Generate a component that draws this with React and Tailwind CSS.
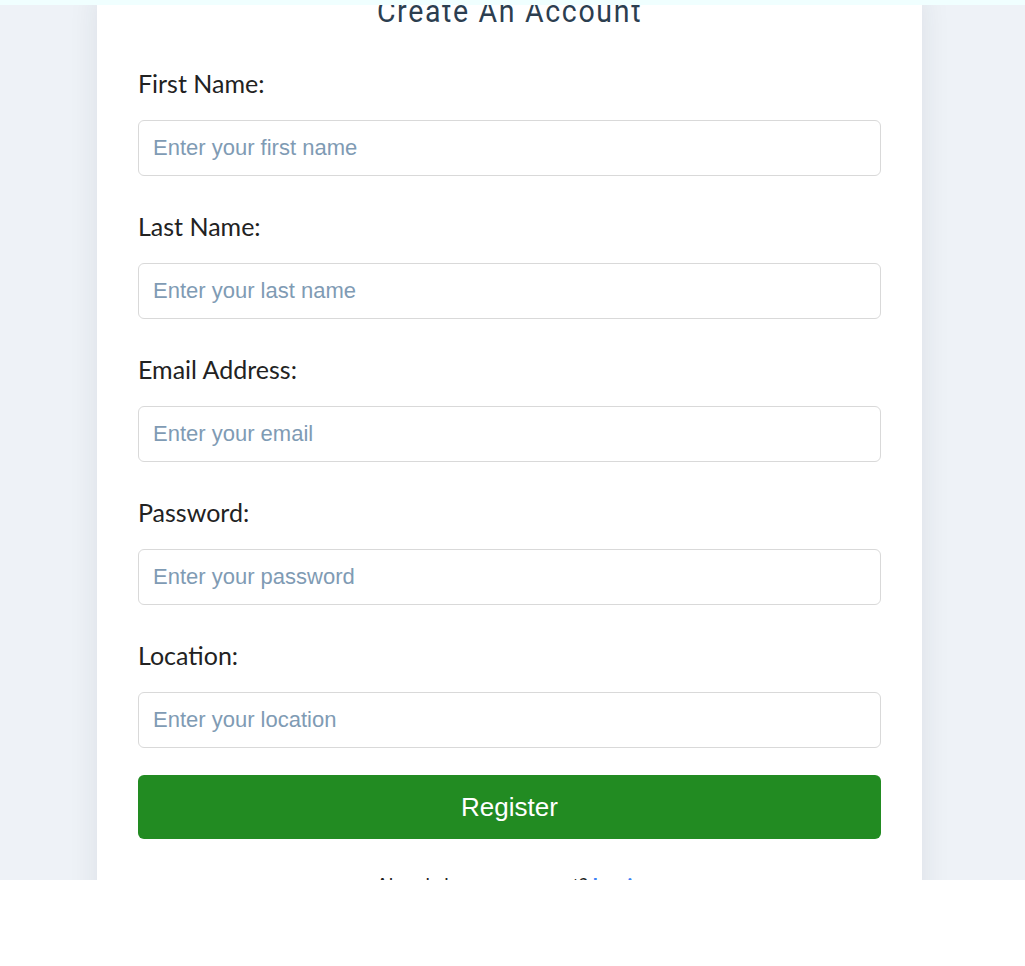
const fields = [
  { label: "First Name:", placeholder: "Enter your first name", type: "text" },
  { label: "Last Name:", placeholder: "Enter your last name", type: "text" },
  { label: "Email Address:", placeholder: "Enter your email", type: "email" },
  { label: "Password:", placeholder: "Enter your password", type: "password" },
  { label: "Location:", placeholder: "Enter your location", type: "text" },
];

const App = () => {
  return (
    <div className="h-[966px] flex flex-col bg-white">
      {/* top strip */}
      <div className="h-[5px] bg-[#f0ffff]" />

      <div className="h-[875px] overflow-hidden bg-[#eef2f7]">
        <div className="ml-[97px] w-[825px] min-h-[1000px] bg-white shadow-[0_0_28px_rgba(30,40,60,0.09)] px-[41px] pb-[40px]">
          <h2 className="-mt-[11px] text-center text-[31px] leading-[36px] tracking-[1.8px] text-[#2c3e50] font-['Roboto',sans-serif] scale-x-[0.92]">
            Create An Account
          </h2>

          <form className="mt-[37px] flex flex-col" onSubmit={(e) => e.preventDefault()}>
            {fields.map((f, i) => (
              <div
                key={f.label}
                className={i === fields.length - 1 ? "flex flex-col mb-[27px]" : "flex flex-col mb-[34px]"}
              >
                <label className="text-[25px] leading-[33px] text-[#222] font-['Lato',sans-serif] mb-[20px]">
                  {f.label}
                </label>
                <input
                  type={f.type}
                  placeholder={f.placeholder}
                  className="h-[56px] w-full rounded-[6px] border border-[#d9d9d9] px-[14px] text-[22px] font-['Liberation_Sans',Arial,sans-serif] placeholder:text-[#7f9bb4] outline-none"
                />
              </div>
            ))}

            <button
              type="submit"
              className="h-[64px] w-full rounded-[6px] bg-[#228b22] text-white text-[26px] font-['Liberation_Sans',Arial,sans-serif]"
            >
              Register
            </button>
          </form>

          <p className="mt-[32px] text-center text-[19px] leading-[28px] text-[#222] font-['Lato',sans-serif]">
            Already have an account?{" "}
            <a href="#" className="text-[#3b82f6] font-bold">
              Log in
            </a>
          </p>
        </div>
      </div>
    </div>
  );
};

export default App;
